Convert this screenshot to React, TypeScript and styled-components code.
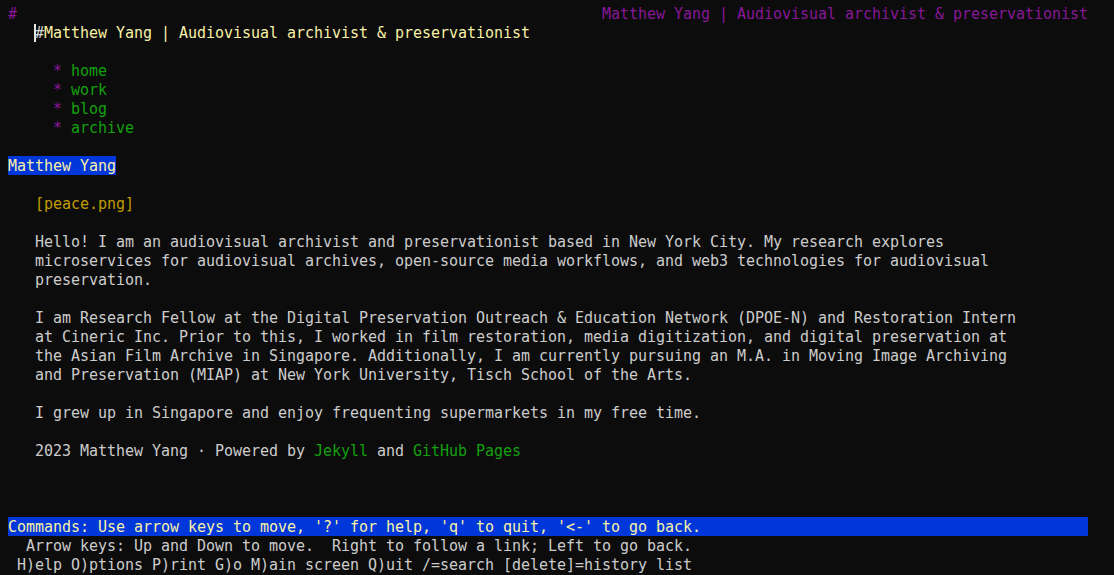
import React from "react";
import styled, { createGlobalStyle } from "styled-components";

const C = {
  bg: "#0c0c0c",
  fg: "#cccccc",
  purple: "#881798",
  green: "#13a10e",
  yellow: "#c19c00",
  bright: "#f9f1a5",
  blue: "#0037da",
};

const Global = createGlobalStyle`
  html, body { margin: 0; padding: 0; background: ${C.bg}; }
  body { overflow: hidden; }
`;

const Screen = styled.div`
  box-sizing: border-box;
  width: 1114px;
  height: 575px;
  padding: 3.5px 8px 0 8px;
  background: ${C.bg};
  color: ${C.fg};
  font-family: "DejaVu Sans Mono", "Liberation Mono", monospace;
  font-size: 15px;
  letter-spacing: -0.03px;
  display: flex;
  flex-direction: column;
`;

const Line = styled.div<{ $bg?: string; $indent?: number; $split?: boolean; $fit?: boolean }>`
  flex: none;
  height: 19px;
  line-height: 18px;
  padding-top: 1px;
  white-space: pre;
  width: ${(p) => (p.$fit ? "max-content" : "1080px")};
  padding-left: ${(p) => (p.$indent ?? 0) * 9}px;
  box-sizing: border-box;
  background: ${(p) => p.$bg ?? "transparent"};
  display: flex;
  justify-content: ${(p) => (p.$split ? "space-between" : "flex-start")};
`;

const Span = styled.span<{ $c?: string }>`
  color: ${(p) => p.$c ?? "inherit"};
`;

const Cursor = styled.span`
  position: relative;
  color: #d8d8d8;
  &::before {
    content: "";
    position: absolute;
    left: -1px;
    top: 0px;
    width: 2px;
    height: 18px;
    background: #e6e6e6;
  }
`;

const Blank = () => <Line />;

const navItems = ["home", "work", "blog", "archive"];

export default function App() {
  return (
    <>
      <Global />
      <Screen>
        <Line $split>
          <Span $c={C.purple}>#</Span>
          <Span $c={C.purple}>Matthew Yang | Audiovisual archivist &amp; preservationist</Span>
        </Line>
        <Line $indent={3}>
          <Cursor>#</Cursor>
          <Span $c={C.bright}>Matthew Yang | Audiovisual archivist &amp; preservationist</Span>
        </Line>
        <Blank />
        {navItems.map((n) => (
          <Line key={n} $indent={5}>
            <Span $c={C.purple}>* </Span>
            <Span $c={C.green}>{n}</Span>
          </Line>
        ))}
        <Blank />
        <Line $bg={C.blue} $fit>
          <Span $c={C.bright}>Matthew Yang</Span>
        </Line>
        <Blank />
        <Line $indent={3}>
          <Span $c={C.yellow}>[peace.png]</Span>
        </Line>
        <Blank />
        <Line $indent={3}>Hello! I am an audiovisual archivist and preservationist based in New York City. My research explores</Line>
        <Line $indent={3}>microservices for audiovisual archives, open-source media workflows, and web3 technologies for audiovisual</Line>
        <Line $indent={3}>preservation.</Line>
        <Blank />
        <Line $indent={3}>I am Research Fellow at the Digital Preservation Outreach &amp; Education Network (DPOE-N) and Restoration Intern</Line>
        <Line $indent={3}>at Cineric Inc. Prior to this, I worked in film restoration, media digitization, and digital preservation at</Line>
        <Line $indent={3}>the Asian Film Archive in Singapore. Additionally, I am currently pursuing an M.A. in Moving Image Archiving</Line>
        <Line $indent={3}>and Preservation (MIAP) at New York University, Tisch School of the Arts.</Line>
        <Blank />
        <Line $indent={3}>I grew up in Singapore and enjoy frequenting supermarkets in my free time.</Line>
        <Blank />
        <Line $indent={3}>
          <Span>2023 Matthew Yang · Powered by </Span>
          <Span $c={C.green}>Jekyll</Span>
          <Span> and </Span>
          <Span $c={C.green}>GitHub Pages</Span>
        </Line>
        <Blank />
        <Blank />
        <Blank />
        <Line $bg={C.blue}>
          <Span $c={C.bright}>Commands: Use arrow keys to move, '?' for help, 'q' to quit, '&lt;-' to go back.</Span>
        </Line>
        <Line $indent={2}>Arrow keys: Up and Down to move.  Right to follow a link; Left to go back.</Line>
        <Line $indent={1}>H)elp O)ptions P)rint G)o M)ain screen Q)uit /=search [delete]=history list</Line>
      </Screen>
    </>
  );
}
